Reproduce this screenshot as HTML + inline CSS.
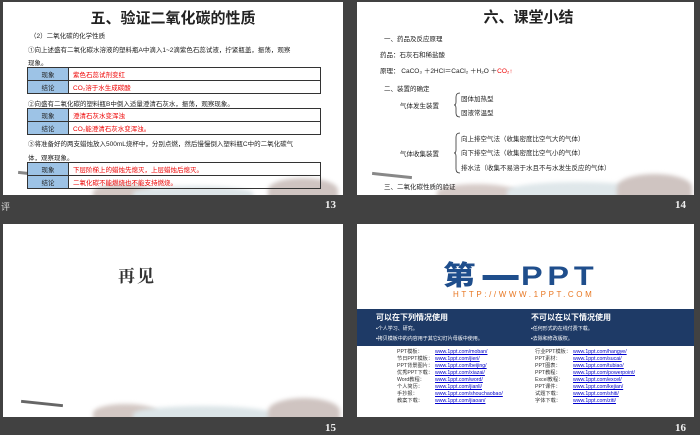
<!DOCTYPE html>
<html><head><meta charset="utf-8"><style>
*{margin:0;padding:0;box-sizing:border-box}
body{width:700px;height:435px;background:#414141;position:relative;overflow:hidden;font-family:"Liberation Sans","Noto Sans CJK SC",sans-serif}
.s{position:absolute;background:#fff;overflow:hidden}
.a{position:absolute;white-space:nowrap}
.n{position:absolute;color:#eee;font:bold 11px "Liberation Serif",serif}
.t{font-family:"Liberation Sans","Noto Sans CJK SC",sans-serif;font-weight:bold;color:#222}
.p{font-size:6.5px;color:#222}
table{position:absolute;border-collapse:collapse;font-size:6.5px}
td{border:1px solid #333;height:13px;padding:0 4px}
td.l{background:#9dc3e6;width:41px;text-align:center;color:#222}
td.r{color:#e00;width:252px}
.m{position:absolute;border-radius:50% 50% 0 0;filter:blur(2px)}
.lk{color:#00c;text-decoration:underline}
</style></head><body>

<!-- slide 13 -->
<div class="s" style="left:3px;top:2px;width:340px;height:193px">
 <div class="m" style="left:90px;top:182px;width:60px;height:16px;background:#d3c8c4"></div>
 <div class="m" style="left:130px;top:184px;width:120px;height:14px;background:#dde5e8"></div>
 <div class="m" style="left:265px;top:176px;width:70px;height:24px;background:#cfc4c1"></div>
 <div class="a" style="left:15px;top:171px;width:40px;height:3px;background:#888;transform:rotate(6deg)"></div>
 <div class="a t" style="left:0;width:340px;text-align:center;top:5px;font-size:15px">五、验证二氧化碳的性质</div>
 <div class="a p" style="left:27px;top:28px">（2）二氧化碳的化学性质</div>
 <div class="a p" style="left:25px;top:42px">①向上述盛有二氧化碳水溶液的塑料瓶A中滴入1~2滴紫色石蕊试液，拧紧瓶盖，振荡，观察</div>
 <div class="a p" style="left:25px;top:55px">现象。</div>
 <table style="left:24px;top:65px"><tr><td class="l">现象</td><td class="r">紫色石蕊试剂变红</td></tr><tr><td class="l">结论</td><td class="r">CO₂溶于水生成碳酸</td></tr></table>
 <div class="a p" style="left:25px;top:96px">②向盛有二氧化碳的塑料瓶B中倒入适量澄清石灰水，振荡，观察现象。</div>
 <table style="left:24px;top:106px"><tr><td class="l">现象</td><td class="r">澄清石灰水变浑浊</td></tr><tr><td class="l">结论</td><td class="r">CO₂能澄清石灰水变浑浊。</td></tr></table>
 <div class="a p" style="left:25px;top:136px">③将准备好的两支蜡烛放入500mL烧杯中，分别点燃，然后慢慢倒入塑料瓶C中的二氧化碳气</div>
 <div class="a p" style="left:25px;top:150px">体，观察现象。</div>
 <table style="left:24px;top:160px"><tr><td class="l">现象</td><td class="r">下层阶梯上的蜡烛先熄灭，上层蜡烛后熄灭。</td></tr><tr><td class="l">结论</td><td class="r">二氧化碳不能燃烧也不能支持燃烧。</td></tr></table>
</div>
<div class="a" style="left:1px;top:200px;color:#ddd;font-size:9px">评</div>
<div class="n" style="left:325px;top:199px">13</div>

<!-- slide 14 -->
<div class="s" style="left:357px;top:2px;width:337px;height:193px">
 <div class="m" style="left:80px;top:182px;width:80px;height:16px;background:#d6cbc8"></div>
 <div class="m" style="left:150px;top:180px;width:140px;height:18px;background:#dfe7ea"></div>
 <div class="m" style="left:260px;top:172px;width:75px;height:26px;background:#cfc4c1"></div>
 <div class="a" style="left:15px;top:172px;width:40px;height:3px;background:#888;transform:rotate(6deg)"></div>
 <div class="a t" style="left:0;width:343px;text-align:center;top:4px;font-size:15px">六、课堂小结</div>
 <div class="a p" style="left:27px;top:31px">一、药品及反应原理</div>
 <div class="a p" style="left:23px;top:47px">药品：石灰石和稀盐酸</div>
 <div class="a p" style="left:23px;top:63px">原理： CaCO₃ ＋2HCl＝CaCl₂ ＋H₂O ＋<span style="color:#e00">CO₂↑</span></div>
 <div class="a p" style="left:27px;top:81px">二、装置的确定</div>
 <div class="a p" style="left:43px;top:98px">气体发生装置</div>
 <svg class="a" style="left:96px;top:90px" width="8" height="26"><path d="M7 1 Q3 1 3 5 L3 10 Q3 13 1 13 Q3 13 3 16 L3 21 Q3 25 7 25" fill="none" stroke="#333" stroke-width="0.8"/></svg>
 <div class="a p" style="left:104px;top:91px">固体加热型</div>
 <div class="a p" style="left:104px;top:105px">固液常温型</div>
 <div class="a p" style="left:43px;top:146px">气体收集装置</div>
 <svg class="a" style="left:96px;top:130px" width="8" height="42"><path d="M7 1 Q3 1 3 5 L3 18 Q3 21 1 21 Q3 21 3 24 L3 37 Q3 41 7 41" fill="none" stroke="#333" stroke-width="0.8"/></svg>
 <div class="a p" style="left:104px;top:131px">向上排空气法（收集密度比空气大的气体）</div>
 <div class="a p" style="left:104px;top:145px">向下排空气法（收集密度比空气小的气体）</div>
 <div class="a p" style="left:104px;top:160px">排水法（收集不易溶于水且不与水发生反应的气体）</div>
 <div class="a p" style="left:27px;top:179px">三、二氧化碳性质的验证</div>
</div>
<div class="n" style="left:675px;top:199px">14</div>

<!-- slide 15 -->
<div class="s" style="left:3px;top:224px;width:340px;height:193px">
 <div class="m" style="left:90px;top:180px;width:65px;height:18px;background:#d3c8c4"></div>
 <div class="m" style="left:130px;top:182px;width:140px;height:16px;background:#dbe4e7"></div>
 <div class="m" style="left:265px;top:174px;width:72px;height:26px;background:#cfc4c1"></div>
 <div class="a" style="left:18px;top:178px;width:42px;height:3px;background:#666;transform:rotate(6deg)"></div>
 <div class="a" style="left:115px;top:38px;font:bold 17px 'Liberation Serif','Noto Serif CJK SC',serif;color:#333;letter-spacing:2px">再见</div>
</div>
<div class="n" style="left:325px;top:422px">15</div>

<!-- slide 16 -->
<div class="s" style="left:357px;top:224px;width:337px;height:193px">
 <div class="a" style="left:86px;top:30px;font:900 27px 'Liberation Sans','Noto Sans CJK SC',sans-serif;color:#1f4e8c;letter-spacing:4px;transform:scaleX(1.2);transform-origin:left">第<span style="display:inline-block;width:30px;height:5px;background:#1f4e8c;vertical-align:middle;margin:0 2px"></span>PPT</div>
 <div class="a" style="left:96px;top:66px;font-size:8px;color:#e87722;letter-spacing:2.6px">HTTP://WWW.1PPT.COM</div>
 <div class="a" style="left:0;top:85px;width:337px;height:37px;background:#1e3a66"></div>
 <div class="a" style="left:19px;top:88px;color:#fff;font-size:8px;font-weight:bold">可以在下列情况使用</div>
 <div class="a" style="left:19px;top:101px;color:#fff;font-size:5px">▪个人学习、研究。</div>
 <div class="a" style="left:19px;top:111px;color:#fff;font-size:5px">▪拷贝模板中的内容用于其它幻灯片母版中使用。</div>
 <div class="a" style="left:174px;top:88px;color:#fff;font-size:8px;font-weight:bold">不可以在以下情况使用</div>
 <div class="a" style="left:174px;top:101px;color:#fff;font-size:5px">▪任何形式的在线付费下载。</div>
 <div class="a" style="left:174px;top:111px;color:#fff;font-size:5px">▪去除和修改版权。</div>
 <div class="a" style="left:40px;top:125px;font-size:5.2px;line-height:7px;color:#333">PPT模板：<br>节日PPT模板：<br>PPT背景图片：<br>优秀PPT下载：<br>Word教程：<br>个人简历：<br>手抄报：<br>教案下载：</div>
 <div class="a lk" style="left:78px;top:125px;font-size:5.2px;line-height:7px">www.1ppt.com/moban/<br>www.1ppt.com/jieri/<br>www.1ppt.com/beijing/<br>www.1ppt.com/xiazai/<br>www.1ppt.com/word/<br>www.1ppt.com/jianli/<br>www.1ppt.com/shouchaobao/<br>www.1ppt.com/jiaoan/</div>
 <div class="a" style="left:178px;top:125px;font-size:5.2px;line-height:7px;color:#333">行业PPT模板：<br>PPT素材：<br>PPT图表：<br>PPT教程：<br>Excel教程：<br>PPT课件：<br>试题下载：<br>字体下载：</div>
 <div class="a lk" style="left:216px;top:125px;font-size:5.2px;line-height:7px">www.1ppt.com/hangye/<br>www.1ppt.com/sucai/<br>www.1ppt.com/tubiao/<br>www.1ppt.com/powerpoint/<br>www.1ppt.com/excel/<br>www.1ppt.com/kejian/<br>www.1ppt.com/shiti/<br>www.1ppt.com/ziti/</div>
</div>
<div class="n" style="left:675px;top:422px">16</div>
</body></html>
